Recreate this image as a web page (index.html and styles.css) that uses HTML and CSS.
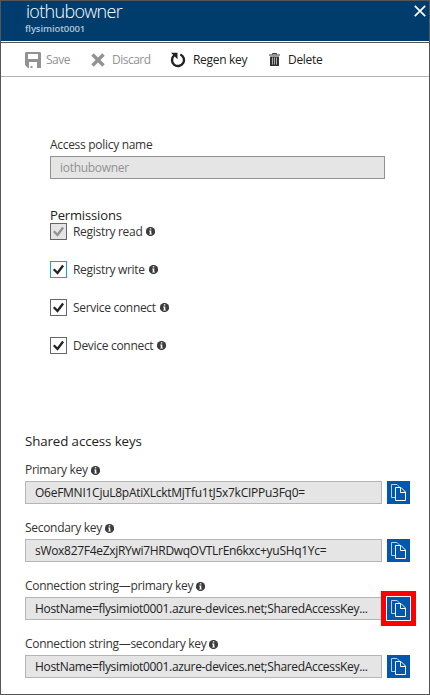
FILE: index.html
```html
<!DOCTYPE html>
<html lang="en">
<head>
<meta charset="utf-8">
<title>iothubowner</title>
<link rel="stylesheet" href="styles.css">
</head>
<body>
<svg class="defs" aria-hidden="true">
  <symbol id="info" viewBox="0 0 9 9"><circle cx="4.5" cy="4.5" r="4.6" fill="#3c3c3c"/><path d="M3.800 1.200h1.500v1.300H3.800zM3.200 3.500h2.100v3.200h.6v.9H3.200v-.9h.6V4.400h-.6z" fill="#fff"/></symbol>
  <symbol id="check" viewBox="0 0 17 17"><path d="M3.800 8.200l3.700 3.800 5.600-7.500" fill="none" stroke="currentColor" stroke-width="2.300"/></symbol>
  <symbol id="copy" viewBox="0 0 23 23"><path d="M8.500 16.500h-4v-13H10l2.500 2.500" fill="none" stroke="#b8d2ec"/><path d="M8.500 6.500h5.500l4.500 4.500v8.500h-10z" fill="#0058ad" stroke="#fff"/><path d="M13.500 6.500v5h5" fill="none" stroke="#fff"/></symbol>
</svg>
<div class="blade">
  <header class="head">
    <div><h1>iothubowner</h1><p class="sub">flysimiot0001</p></div>
    <svg class="close" viewBox="0 0 12 12"><path d="M.8.8l10.400 10.400M11.200.8L.8 11.200" stroke="#fff" stroke-width="1.700"/></svg>
  </header>
  <nav class="bar">
    <span class="cmd save off"><svg width="16" height="16" viewBox="0 0 16 16"><path fill="#929292" fill-rule="evenodd" d="M1 0h14l1 1v15H3l-3-3V1zM3 2v5h10V2zM4 10v6h1.500v-2h2v2H12v-6z"/></svg><span>Save</span></span>
    <span class="cmd discard off"><svg width="14" height="14" viewBox="0 0 14 14"><path d="M1.500 1.500l11 11M12.500 1.500l-11 11" stroke="#929292" stroke-width="3.400"/></svg><span>Discard</span></span>
    <span class="cmd regen"><svg width="16" height="16" viewBox="0 0 16 16"><path d="M10.300 2.500A6 6 0 1 1 4.200 3.400" fill="none" stroke="#222" stroke-width="2.400"/><path d="M1 .8h6.500v6.500z" fill="#222"/></svg><span>Regen key</span></span>
    <span class="cmd delete"><svg width="11" height="13" viewBox="0 0 11 13"><path d="M3.500 1.500V.5h4v1M0 2h11" fill="none" stroke="#333"/><path d="M1 3.500h9V13H1z" fill="#333"/><path d="M3.500 4.500v7M5.500 4.500v7M7.500 4.500v7" stroke="#ccc" stroke-width=".8"/></svg><span>Delete</span></span>
  </nav>
  <section class="policy">
    <div class="label">Access policy name</div>
    <div class="field disabled">iothubowner</div>
    <h2 class="perm">Permissions</h2>
    <div class="row"><span class="box dim"><svg><use href="#check"/></svg></span><span>Registry read</span><svg class="info"><use href="#info"/></svg></div>
    <div class="row"><span class="box focus"><svg><use href="#check"/></svg></span><span>Registry write</span><svg class="info"><use href="#info"/></svg></div>
    <div class="row"><span class="box"><svg><use href="#check"/></svg></span><span>Service connect</span><svg class="info"><use href="#info"/></svg></div>
    <div class="row"><span class="box"><svg><use href="#check"/></svg></span><span>Device connect</span><svg class="info"><use href="#info"/></svg></div>
  </section>
  <section class="keys">
    <h2>Shared access keys</h2>
    <div class="label"><span>Primary key</span><svg class="info"><use href="#info"/></svg></div>
    <div class="line"><div class="field first">O6eFMNI1CjuL8pAtiXLcktMjTfu1tJ5x7kCIPPu3Fq0=</div><span class="copy"><svg><use href="#copy"/></svg></span></div>
    <div class="label"><span>Secondary key</span><svg class="info"><use href="#info"/></svg></div>
    <div class="line"><div class="field">sWox827F4eZxjRYwi7HRDwqOVTLrEn6kxc+yuSHq1Yc=</div><span class="copy"><svg><use href="#copy"/></svg></span></div>
    <div class="label"><span>Connection string—primary key</span><svg class="info"><use href="#info"/></svg></div>
    <div class="line"><div class="field host">HostName=flysimiot0001.azure-devices.net;SharedAccessKey...</div><span class="copy marked"><svg><use href="#copy"/></svg></span></div>
    <div class="label"><span>Connection string—secondary key</span><svg class="info"><use href="#info"/></svg></div>
    <div class="line"><div class="field host">HostName=flysimiot0001.azure-devices.net;SharedAccessKey...</div><span class="copy"><svg><use href="#copy"/></svg></span></div>
  </section>
</div>
</body>
</html>
```
FILE: styles.css
```css
* { box-sizing: border-box; margin: 0; padding: 0; }
body { font: 12px/16px "Open Sans", "Noto Sans", sans-serif; color: #333; background: #fff; }
svg { display: block; flex: none; }
.defs { display: none; }
.blade { width: 430px; height: 695px; border: 1px solid #555; overflow: hidden; }
.head { height: 40px; background: #003d6d; display: flex; justify-content: space-between; padding: 0 3px 0 24px; }
h1 { font-size: 18px; line-height: 21px; font-weight: 300; color: #fff; letter-spacing: -.7px; padding-left: 1px; }
.sub { font-size: 9.500px; line-height: 14px; font-weight: 600; color: #b5c5d3; letter-spacing: -.1px; }
.close { width: 12px; height: 12px; margin-top: 4px; }
.bar { height: 35px; margin-top: 1px; border-top: 1px solid #555; border-bottom: 1px solid #b5b5b5; display: flex; align-items: center; padding-left: 24px; white-space: nowrap; }
.cmd { display: flex; align-items: center; gap: 5px; color: #222; letter-spacing: -.3px; }
.off { color: #929292; letter-spacing: -.5px; }
.save { width: 66px; }
.discard { width: 79px; gap: 7px; }
.regen { width: 99px; gap: 7px; }
.delete { gap: 8px; }
.policy { padding: 60px 44px 0 49px; height: 354px; }
.label { height: 19px; display: flex; align-items: center; gap: 3px; padding-bottom: 3px; white-space: nowrap; letter-spacing: -.3px; }
.field { height: 23px; border: 1px solid #b5b5b5; background: #e5e5e5; color: #222; padding-left: 9px; line-height: 21px; white-space: nowrap; letter-spacing: -.3px; flex: 1; }
.first { letter-spacing: -.26px; }
.host { letter-spacing: -.33px; }
.disabled { border-color: #929292; color: #929292; }
.info { width: 9px; height: 9px; overflow: visible; }
h2 { font-size: 13px; line-height: 18px; font-weight: 400; color: #222; letter-spacing: -.15px; }
.perm { margin-top: 27px; height: 17px; }
.row { height: 17px; margin-bottom: 21px; display: flex; align-items: center; white-space: nowrap; letter-spacing: -.3px; }
.row .info { margin-left: 4px; }
.box { width: 17px; height: 17px; border: 1px solid #666; margin-right: 6px; color: #222; }
.box svg { width: 17px; height: 17px; margin: -1px; }
.dim { background: #e5e5e5; color: #929292; }
.focus { border: 1px solid #10a5dc; }
.keys { padding: 0 19px 0 24px; }
.keys h2 { height: 31px; padding-top: 1px; font-size: 13.300px; letter-spacing: -.1px; }
.line { display: flex; gap: 5px; margin-bottom: 16px; }
.copy { width: 23px; height: 23px; background: #0058ad; }
.copy svg { width: 23px; height: 23px; }
.marked { box-shadow: 0 0 0 1px #fff, 0 0 0 6px #f00; }
```
